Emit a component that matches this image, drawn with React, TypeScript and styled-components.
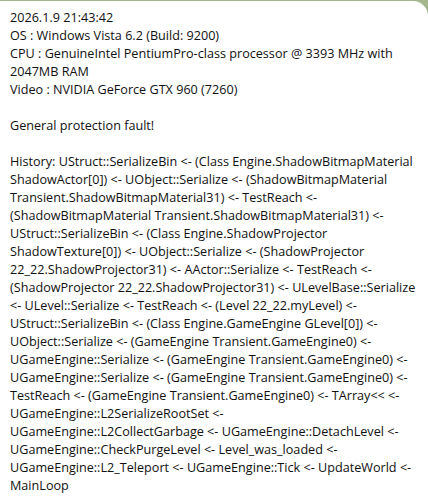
import React from "react";
import styled, { createGlobalStyle } from "styled-components";

const Global = createGlobalStyle`
  html, body { margin: 0; padding: 0; }
  body { width: 428px; height: 496px; overflow: hidden; background: #a3b68c; }
`;

const Page = styled.div`
  width: 428px;
  height: 496px;
  overflow: hidden;
  background: #a3b68c;
  padding-top: 1px;
  box-sizing: border-box;
`;

const Bubble = styled.div`
  width: 428px;
  height: 520px;
  background: #fff;
  border-top-right-radius: 15px;
  box-sizing: border-box;
  padding: 8px 0 0 10px;
`;

const Text = styled.div`
  font-family: "Open Sans", "Liberation Sans", sans-serif;
  font-size: 12.63px;
  line-height: 18px;
  color: #111;
  white-space: pre;
`;

const Line = styled.div`
  height: 18px;
`;

const lines = [
  "2026.1.9 21:43:42",
  "OS : Windows Vista 6.2 (Build: 9200)",
  "CPU : GenuineIntel PentiumPro-class processor @ 3393 MHz with",
  "2047MB RAM",
  "Video : NVIDIA GeForce GTX 960 (7260)",
  "",
  "General protection fault!",
  "",
  "History: UStruct::SerializeBin <- (Class Engine.ShadowBitmapMaterial",
  "ShadowActor[0]) <- UObject::Serialize <- (ShadowBitmapMaterial",
  "Transient.ShadowBitmapMaterial31) <- TestReach <-",
  "(ShadowBitmapMaterial Transient.ShadowBitmapMaterial31) <-",
  "UStruct::SerializeBin <- (Class Engine.ShadowProjector",
  "ShadowTexture[0]) <- UObject::Serialize <- (ShadowProjector",
  "22_22.ShadowProjector31) <- AActor::Serialize <- TestReach <-",
  "(ShadowProjector 22_22.ShadowProjector31) <- ULevelBase::Serialize",
  "<- ULevel::Serialize <- TestReach <- (Level 22_22.myLevel) <-",
  "UStruct::SerializeBin <- (Class Engine.GameEngine GLevel[0]) <-",
  "UObject::Serialize <- (GameEngine Transient.GameEngine0) <-",
  "UGameEngine::Serialize <- (GameEngine Transient.GameEngine0) <-",
  "UGameEngine::Serialize <- (GameEngine Transient.GameEngine0) <-",
  "TestReach <- (GameEngine Transient.GameEngine0) <- TArray<< <-",
  "UGameEngine::L2SerializeRootSet <-",
  "UGameEngine::L2CollectGarbage <- UGameEngine::DetachLevel <-",
  "UGameEngine::CheckPurgeLevel <- Level_was_loaded <-",
  "UGameEngine::L2_Teleport <- UGameEngine::Tick <- UpdateWorld <-",
  "MainLoop",
];

export default function App() {
  return (
    <Page>
      <Global />
      <Bubble>
        <Text>
          {lines.map((l, i) => (
            <Line key={i}>{l}</Line>
          ))}
        </Text>
      </Bubble>
    </Page>
  );
}
